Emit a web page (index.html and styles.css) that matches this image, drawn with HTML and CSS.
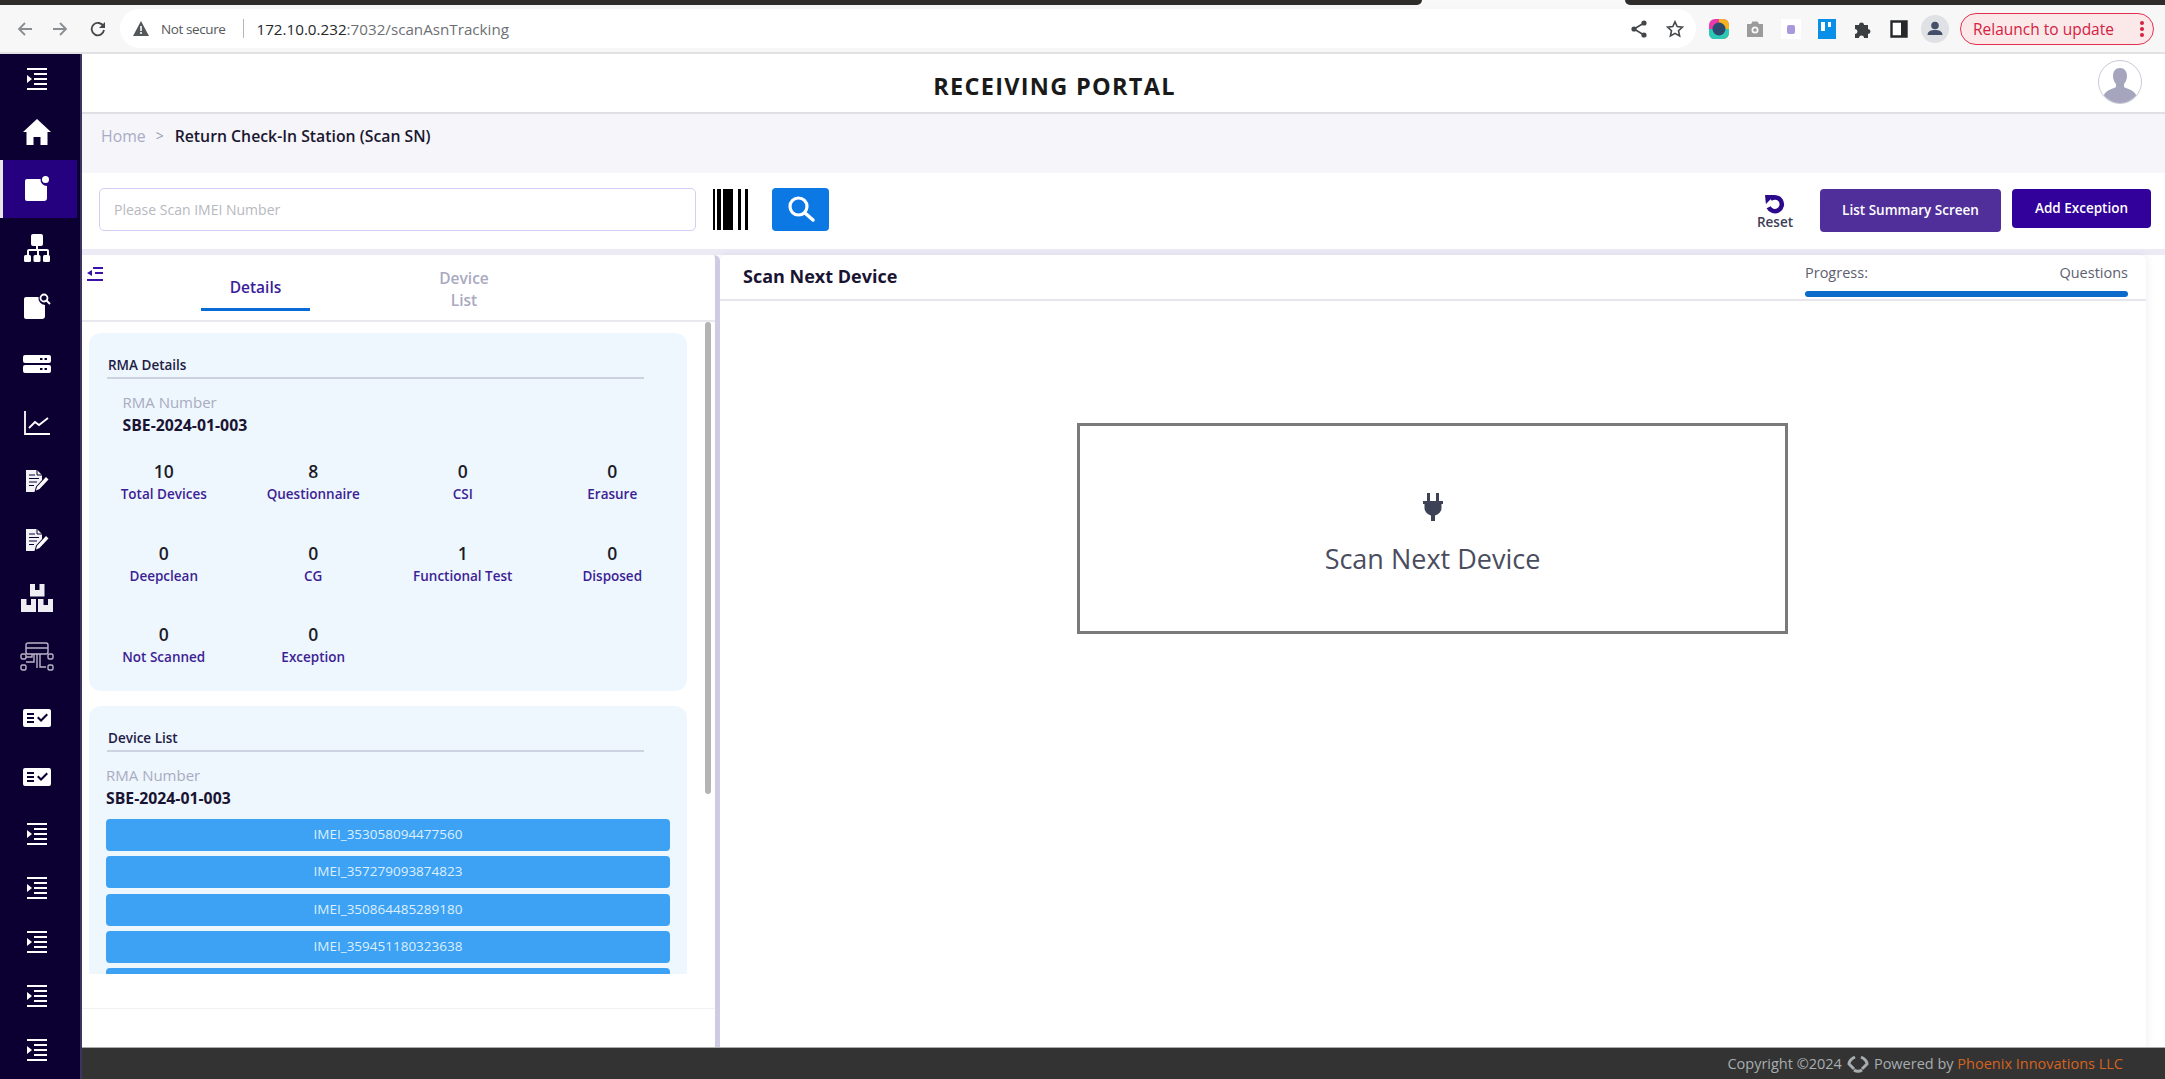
FILE: index.html
```html
<!DOCTYPE html>
<html lang="en">
<head>
<meta charset="utf-8">
<title>Receiving Portal</title>
<link rel="stylesheet" href="styles.css">
</head>
<body>
<svg class="defs" width="0" height="0" aria-hidden="true">
  <symbol id="i-indent" viewBox="0 0 20 22"><path fill="#fff" d="M0 0h20v2H0zM7 5h13v2H7zM7 10h13v2H7zM7 15h13v2H7zM0 20h20v2H0zM0 7l5 4-5 4z"/></symbol>
  <symbol id="i-check" viewBox="0 0 28 18"><path fill="#fff" fill-rule="evenodd" d="M2 0h24a2 2 0 0 1 2 2v14a2 2 0 0 1-2 2H2a2 2 0 0 1-2-2V2a2 2 0 0 1 2-2zM4 4v2h7V4zM4 8v2h7V8zM4 12v2h7v-2zM14 9l4 4 7-7-1.500-1.500L18 10l-2.500-2.500z"/></symbol>
  <symbol id="i-edit" viewBox="0 0 24 24"><path fill="#f2f1f6" d="M1 1h11l5 5v5l-6 6.500-1.500 5.500H1z"/><path fill="none" stroke="#0c0033" stroke-width="1" d="M12 1v5h5"/><path fill="none" stroke="#0c0033" stroke-width="1.200" d="M4 6h6M4 9.500h10M4 13h8M4 16.500h5"/><path fill="#fff" d="M21 8l2.500 2.500-9 9.500-3.500 1.500 1-3.800z"/></symbol>
</svg>

<div class="tabstrip"><span class="strip-dark strip-a"></span><span class="strip-gap"></span><span class="strip-dark strip-b"></span></div>
<header class="browser">
  <span class="nav"><svg width="16" height="16" viewBox="0 0 16 16"><path d="M15 8H2M8 2L2 8l6 6" fill="none" stroke="#8a8d91" stroke-width="1.800"/></svg></span>
  <span class="nav"><svg width="16" height="16" viewBox="0 0 16 16"><path d="M1 8h13M8 2l6 6-6 6" fill="none" stroke="#8a8d91" stroke-width="1.800"/></svg></span>
  <span class="nav nav-reload"><svg width="16" height="16" viewBox="0 0 16 16"><path d="M13.500 5.500A6.200 6.200 0 1 0 14 9" fill="none" stroke="#44474a" stroke-width="1.800"/><path d="M15 1v6H9z" fill="#44474a"/></svg></span>
  <div class="omnibox">
    <svg class="warn" width="16" height="15" viewBox="0 0 16 15"><path d="M8 0l8 15H0z" fill="#55585b"/><path d="M7.200 5h1.600v5H7.200zM7.200 11h1.600v2H7.200z" fill="#fff"/></svg>
    <span class="not-secure">Not secure</span>
    <span class="omni-sep"></span>
    <span class="url"><b>172.10.0.232</b>:7032/scanAsnTracking</span>
    <span class="omni-right">
      <svg width="16" height="18" viewBox="0 0 16 18"><path d="M13 3L3 9l10 6" fill="none" stroke="#44474a" stroke-width="1.600"/><circle cx="13" cy="3" r="2.600" fill="#44474a"/><circle cx="3" cy="9" r="2.600" fill="#44474a"/><circle cx="13" cy="15" r="2.600" fill="#44474a"/></svg>
      <svg width="18" height="18" viewBox="0 0 18 18"><path d="M9 1.800l2.200 4.800 5.200.6-3.900 3.500 1.100 5.200L9 13.300l-4.600 2.600 1.100-5.200L1.600 7.200l5.200-.6z" fill="none" stroke="#44474a" stroke-width="1.600"/></svg>
    </span>
  </div>
  <span class="ext ext-first"><svg width="20" height="20" viewBox="0 0 20 20"><rect width="20" height="20" rx="6" fill="#e63ba8"/><path d="M10 0h4a6 6 0 0 1 6 6v8a6 6 0 0 1-6 6h-4z" fill="#f4b31f"/><path d="M4 20a6 6 0 0 1-4-6v-4h20v4a6 6 0 0 1-6 6z" fill="#2cc8b5"/><circle cx="10" cy="10" r="6.500" fill="#2c4a6e"/></svg></span>
  <span class="ext"><svg width="18" height="18" viewBox="0 0 18 18"><path d="M1 4h4l1.500-2.500h5L13 4h4v13H1z" fill="#9b9b9b"/><circle cx="9" cy="10" r="3.500" fill="#f8f8f8"/><circle cx="9" cy="10" r="1.800" fill="#9b9b9b"/></svg></span>
  <span class="ext"><svg width="20" height="20" viewBox="0 0 20 20"><rect width="20" height="20" fill="#fff"/><rect x="6" y="6" width="8" height="9" rx="2" fill="#a999dc"/></svg></span>
  <span class="ext"><svg width="18" height="20" viewBox="0 0 18 20"><rect width="18" height="20" fill="#0a8fe8"/><rect x="3" y="3" width="4" height="9" fill="#fff"/><rect x="10" y="3" width="3" height="5" fill="#fff"/></svg></span>
  <span class="ext"><svg width="18" height="18" viewBox="0 0 18 18"><path d="M1 5h4a2.500 2.500 0 0 1 5 0h4v4a2.500 2.500 0 0 1 0 5v4h-4a2.500 2.500 0 0 0-5 0H1v-4a2.500 2.500 0 0 0 0-5z" fill="#3c3f42"/></svg></span>
  <span class="ext"><svg width="18" height="18" viewBox="0 0 18 18"><path d="M1.500 1.500h15v15h-15z" fill="#fff" stroke="#26282b" stroke-width="2.400"/><rect x="11" y="1.500" width="5.500" height="15" fill="#26282b"/></svg></span>
  <span class="ext"><svg width="28" height="28" viewBox="0 0 28 28"><circle cx="14" cy="14" r="14" fill="#dfe1e5"/><circle cx="14" cy="10.500" r="3.800" fill="#44506a"/><path d="M6.500 20c0-4 4-5 7.500-5s7.500 1 7.500 5z" fill="#44506a"/></svg></span>
  <div class="relaunch"><span>Relaunch to update</span><i class="dots"></i></div>
</header>

<div class="app">
  <nav class="sidebar">
    <a class="side-item"><svg width="20" height="22"><use href="#i-indent"/></svg></a>
    <a class="side-item"><svg width="28" height="26" viewBox="0 0 28 26"><path fill="#fff" d="M14 0l14 13h-3.500v13h-7v-8h-7v8h-7V13H0z"/></svg></a>
    <a class="side-item active"><svg width="26" height="26" viewBox="0 0 26 26"><path fill="#fff" d="M3 3h13.500a6.500 6.500 0 0 0 6.500 7v12a3 3 0 0 1-3 3H3a2 2 0 0 1-2-2V5a2 2 0 0 1 2-2z"/><circle cx="21.500" cy="3.500" r="3.500" fill="#fff"/></svg></a>
    <a class="side-item"><svg width="26" height="28" viewBox="0 0 26 28"><path fill="#fff" d="M9 0h8a2 2 0 0 1 2 2v8a2 2 0 0 1-2 2h-3v3h9a2 2 0 0 1 2 2v4h-2v-4h-8v4h-2v-4H5v4H3v-4a2 2 0 0 1 2-2h7v-3H9a2 2 0 0 1-2-2V2a2 2 0 0 1 2-2z"/><rect x="0" y="21" width="7" height="7" rx="1.500" fill="#fff"/><rect x="9.500" y="21" width="7" height="7" rx="1.500" fill="#fff"/><rect x="19" y="21" width="7" height="7" rx="1.500" fill="#fff"/></svg></a>
    <a class="side-item"><svg width="28" height="26" viewBox="0 0 28 26"><path fill="#fff" d="M3 4h12.500a7 7 0 0 0 6.500 8v11a3 3 0 0 1-3 3H3a2 2 0 0 1-2-2V6a2 2 0 0 1 2-2z"/><circle cx="21" cy="5" r="3.500" fill="none" stroke="#fff" stroke-width="1.800"/><path d="M23.500 7.500L27 11" stroke="#fff" stroke-width="2"/></svg></a>
    <a class="side-item"><svg width="28" height="18" viewBox="0 0 28 18"><path fill="#fff" fill-rule="evenodd" d="M2 0h24a2 2 0 0 1 2 2v4a2 2 0 0 1-2 2H2a2 2 0 0 1-2-2V2a2 2 0 0 1 2-2zM17 3v2h2.500V3zM21.500 3v2H24V3zM2 10h24a2 2 0 0 1 2 2v4a2 2 0 0 1-2 2H2a2 2 0 0 1-2-2v-4a2 2 0 0 1 2-2zM17 13v2h2.500v-2zM21.500 13v2H24v-2z"/></svg></a>
    <a class="side-item"><svg width="26" height="24" viewBox="0 0 26 24"><path fill="none" stroke="#fff" stroke-width="1.800" d="M1 0v23h25"/><path fill="none" stroke="#fff" stroke-width="1.800" d="M5 17l6-6 4 3 9-7"/></svg></a>
    <a class="side-item"><svg width="24" height="24"><use href="#i-edit"/></svg></a>
    <a class="side-item"><svg width="24" height="24"><use href="#i-edit"/></svg></a>
    <a class="side-item"><svg width="32" height="28" viewBox="0 0 32 28"><path fill="#eeedf4" d="M9 0h14.500v12.500H9zM0 15h15v13H0zM17 15h15v13H17z"/><path fill="#0c0033" d="M14 0h4.500v6H14zM5.500 15H10v6H5.500zM22.500 15H27v6h-4.500z"/></svg></a>
    <a class="side-item"><svg width="34" height="30" viewBox="0 0 34 30"><g fill="none" stroke="#b9b7c8" stroke-width="1.400"><rect x="6" y="1" width="22" height="11" rx="2"/><path d="M6 6h22M14 12v8H6M20 12v13h6M17 12v14M12 12v3H6"/><rect x="1" y="12" width="5" height="5" rx="1.500"/><rect x="28" y="12" width="5" height="5" rx="1.500"/><rect x="1" y="23" width="5" height="5" rx="1.500"/><rect x="28" y="23" width="5" height="5" rx="1.500"/></g></svg></a>
    <a class="side-item"><svg width="28" height="18"><use href="#i-check"/></svg></a>
    <a class="side-item"><svg width="28" height="18"><use href="#i-check"/></svg></a>
    <a class="side-item short"><svg width="20" height="22"><use href="#i-indent"/></svg></a>
    <a class="side-item short"><svg width="20" height="22"><use href="#i-indent"/></svg></a>
    <a class="side-item short"><svg width="20" height="22"><use href="#i-indent"/></svg></a>
    <a class="side-item short"><svg width="20" height="22"><use href="#i-indent"/></svg></a>
    <a class="side-item short"><svg width="20" height="22"><use href="#i-indent"/></svg></a>
  </nav>

  <main class="main">
    <div class="topbar">
      <h1 class="portal-title">RECEIVING PORTAL</h1>
      <svg class="avatar" width="44" height="44" viewBox="0 0 44 44"><defs><clipPath id="avatar-clip"><circle cx="22" cy="22" r="21"/></clipPath></defs><circle cx="22" cy="22" r="21.500" fill="#fff" stroke="#c9c9d6"/><g clip-path="url(#avatar-clip)"><path fill="#a5a5bd" d="M22 8c4.500 0 7 3.500 7 8 0 3.500-1.500 6.500-3 8v3c3 2 12 3 13 11v6H5v-6c1-8 10-9 13-11v-3c-1.500-1.500-3-4.500-3-8 0-4.500 2.500-8 7-8z"/></g></svg>
    </div>
    <div class="crumbs"><span class="crumb-home">Home</span><span class="crumb-sep">&gt;</span><span class="crumb-here">Return Check-In Station (Scan SN)</span></div>
    <div class="actions">
      <input class="scan-input" type="text" placeholder="Please Scan IMEI Number">
      <svg class="barcode" width="36" height="41" viewBox="0 0 36 41"><path fill="#000" d="M0 0h2v41H0zM4 0h4v41H4zM10 0h10v41H10zM25 0h3v41h-3zM32 0h3v41h-3z"/></svg>
      <button class="search-btn" type="button" aria-label="Search"><svg width="30" height="30" viewBox="0 0 30 30"><circle cx="12.500" cy="12.500" r="8.500" fill="none" stroke="#fff" stroke-width="3.200"/><path d="M19 19l8 7" stroke="#fff" stroke-width="3.500" stroke-linecap="round"/></svg></button>
      <div class="reset">
        <svg width="20" height="20" viewBox="0 0 22 22"><path d="M6 5.500a7.600 7.600 0 1 1-2 9" fill="none" stroke="#2c0a8c" stroke-width="5"/><path d="M0 1l11 0L1 11z" fill="#2c0a8c"/></svg>
        <span>Reset</span>
      </div>
      <button class="btn btn-summary" type="button">List Summary Screen</button>
      <button class="btn btn-exception" type="button">Add Exception</button>
    </div>

    <div class="workspace">
      <section class="left-panel">
        <svg class="collapse" width="16" height="14" viewBox="0 0 16 14"><path fill="#3a12a8" d="M6 0h10v2H6zM8 5h8v2H8zM0 12h16v2H0zM5 3v6L0 6z"/></svg>
        <div class="tabs">
          <div class="tab tab-active">Details</div>
          <div class="tab tab-idle">Device<br>List</div>
        </div>
        <div class="scroller">
          <div class="card">
            <div class="card-title">RMA Details</div>
            <div class="rma rma-inset">
              <div class="rma-label">RMA Number</div>
              <div class="rma-value">SBE-2024-01-003</div>
            </div>
            <div class="stats">
              <div class="stat"><b>10</b><span>Total Devices</span></div>
              <div class="stat"><b>8</b><span>Questionnaire</span></div>
              <div class="stat"><b>0</b><span>CSI</span></div>
              <div class="stat"><b>0</b><span>Erasure</span></div>
              <div class="stat"><b>0</b><span>Deepclean</span></div>
              <div class="stat"><b>0</b><span>CG</span></div>
              <div class="stat"><b>1</b><span>Functional Test</span></div>
              <div class="stat"><b>0</b><span>Disposed</span></div>
              <div class="stat"><b>0</b><span>Not Scanned</span></div>
              <div class="stat"><b>0</b><span>Exception</span></div>
            </div>
          </div>
          <div class="card card-list">
            <div class="card-title">Device List</div>
            <div class="rma">
              <div class="rma-label">RMA Number</div>
              <div class="rma-value">SBE-2024-01-003</div>
            </div>
            <div class="imei-list">
              <div class="imei">IMEI_353058094477560</div>
              <div class="imei">IMEI_357279093874823</div>
              <div class="imei">IMEI_350864485289180</div>
              <div class="imei">IMEI_359451180323638</div>
              <div class="imei"></div>
            </div>
          </div>
        </div>
        <div class="panel-foot"></div>
        <div class="scrollbar"></div>
      </section>

      <section class="right-panel">
        <div class="right-head">
          <h2 class="right-title">Scan Next Device</h2>
          <div class="progress">
            <div class="progress-labels"><span>Progress:</span><span>Questions</span></div>
            <div class="progress-bar"></div>
          </div>
        </div>
        <div class="right-body">
          <div class="scan-box">
            <svg width="22" height="28" viewBox="0 0 22 28"><path fill="#3d4256" d="M5 0h3v8H5zM14 0h3v8h-3zM1 8h20v3h-1.500v4c0 4-3.500 6.500-6.500 7.500V28H9v-5.500C6 21.500 2.500 19 2.500 15v-4H1z"/></svg>
            <div class="scan-text">Scan Next Device</div>
          </div>
        </div>
      </section>
    </div>

    <footer class="footer">
      <span>Copyright ©2024</span>
      <svg width="22" height="20" viewBox="0 0 22 20"><path fill="none" stroke="#a8adb0" stroke-width="3" d="M8 3C4 5 2 8 2 10l5 5M14 3c4 2 6 5 6 7l-5 5M7 16c3 2 5 2 8 0"/></svg>
      <span>Powered by <em class="brand">Phoenix Innovations LLC</em></span>
    </footer>
  </main>
</div>
</body>
</html>
```

FILE: styles.css
```css
* { box-sizing: border-box; }
html, body { margin: 0; height: 100%; overflow: hidden; }
body { display: flex; flex-direction: column; background: #fff; font-family: "Open Sans", "Noto Sans", sans-serif; color: #1a1433; }
.defs { position: absolute; }

.tabstrip { display: flex; height: 5px; flex: none; }
.strip-dark { background: #2f2d2b; }
.strip-a { width: 1422px; border-bottom-right-radius: 5px; }
.strip-gap { width: 203px; background: #f8f8f8; }
.strip-b { flex: 1; border-bottom-left-radius: 5px; }

.browser { display: flex; align-items: center; flex: none; height: 49px; padding-left: 7px; background: #f7f7f8; border-bottom: 2px solid #e2e2e4; }
.nav { width: 35px; display: flex; justify-content: center; }
.nav-reload { margin-left: 3px; }
.omnibox { display: flex; align-items: center; width: 1576px; height: 39px; margin-left: 5px; padding-left: 13px; border-radius: 20px; background: #fff; font-size: 15.200px; }
.warn { margin-right: 12px; }
.not-secure { color: #55585b; font-size: 13.500px; letter-spacing: -.4px; }
.omni-sep { width: 1px; height: 19px; margin: 0 12px 0 18px; background: #b5b7ba; }
.url { color: #6d7074; }
.url b { font-weight: 400; color: #26282b; }
.omni-right { display: flex; align-items: center; gap: 19px; margin-left: auto; padding-right: 12px; }
.ext { width: 36px; display: flex; justify-content: center; flex: none; }
.ext-first { margin-left: 5px; }
.relaunch { display: flex; align-items: center; justify-content: space-between; width: 194px; height: 32px; margin-left: 7px; padding: 0 9px 0 12px; border: 1.500px solid #e3304f; border-radius: 16px; background: #fbe9ea; color: #d5203f; font-size: 15.500px; white-space: nowrap; }
.dots { width: 4px; height: 4px; border-radius: 50%; background: #d5203f; box-shadow: 0 -6px 0 #d5203f, 0 6px 0 #d5203f; }

.app { flex: 1; display: flex; min-height: 0; }
.sidebar { width: 82px; flex: none; display: flex; flex-direction: column; background: #0c0033; overflow: hidden; border-right: 2px solid #3d3560; }
.side-item { display: flex; align-items: center; justify-content: center; flex: none; width: 77px; height: 58.400px; padding-right: 3px; }
.side-item.short { height: 54px; }
.side-item:nth-child(1) { height: 50px; }
.side-item:nth-child(2) { height: 56px; }
.side-item:nth-child(11), .side-item:nth-child(12) { height: 60.500px; }
.side-item.active { background: #25007f; border-left: 3px solid #e6e6e6; padding-right: 6px; }
.main { flex: 1; min-width: 0; display: flex; flex-direction: column; }

.topbar { position: relative; flex: none; display: flex; align-items: center; justify-content: center; height: 60px; padding-top: 6px; background: #fff; border-bottom: 2px solid #dfdfe5; }
.portal-title { margin: 0 0 0 -138px; font-size: 23.500px; font-weight: 700; letter-spacing: 1.300px; color: #1a1a1a; }
.avatar { position: absolute; right: 23px; top: 6px; }

.crumbs { flex: none; display: flex; align-items: center; height: 59px; padding: 0 0 16px 19px; background: #f5f5fa; font-size: 15.800px; }
.crumb-home { color: #a9acc4; }
.crumb-sep { margin: 0 11px 0 10px; color: #9a9db0; font-size: 14px; }
.crumb-here { color: #1b1730; font-weight: 600; }

.actions { flex: none; display: flex; align-items: center; height: 76px; padding: 0 14px 4px 17px; background: #fff; }
.scan-input { width: 597px; height: 43px; padding: 0 14px; margin-top: 1px; border: 1.500px solid #d6ccf5; border-radius: 5px; background: #fff; font-family: inherit; font-size: 14px; outline: none; }
.scan-input::placeholder { color: #b8b8c0; }
.barcode { margin-left: 17px; }
.search-btn { display: flex; align-items: center; justify-content: center; width: 57px; height: 43px; margin-left: 23px; border: 0; border-radius: 4px; background: #0b78e3; padding: 0; }
.reset { display: flex; flex-direction: column; align-items: center; margin-left: auto; margin-right: 27px; padding-top: 6px; color: #3d3d55; font-size: 13.500px; line-height: 17px; font-weight: 600; }
.btn { border: 0; border-radius: 4px; color: #fff; font-family: inherit; font-size: 13.500px; font-weight: 600; padding: 0; }
.btn-summary { width: 181px; height: 43px; margin-top: 2px; background: #512f9a; }
.btn-exception { width: 139px; height: 39px; margin-left: 11px; margin-bottom: 2px; background: #32009a; }

.workspace { flex: 1; min-height: 0; display: flex; padding: 6px 19px 0 0; background: linear-gradient(#ecebf5 0, #ecebf5 6px, #fff 6px); }
.left-panel { position: relative; width: 638px; flex: none; display: flex; flex-direction: column; background: #fff; border-radius: 0 6px 0 0; border-right: 5px solid #cfcbe2; }
.collapse { position: absolute; left: 5px; top: 12px; }
.tabs { flex: none; display: flex; height: 67px; padding-left: 119px; border-bottom: 2px solid #e8e8ee; }
.tab { text-align: center; font-size: 15.500px; line-height: 22px; font-weight: 600; }
.tab-active { width: 109px; height: 56px; padding-top: 21px; color: #3a1d9a; border-bottom: 3px solid #0b6bd6; }
.tab-idle { width: 108px; margin-left: 100px; padding-top: 12px; color: #a9a9c0; }
.scroller { height: 652px; flex: none; padding: 11px 0 0 7px; overflow: hidden; }
.panel-foot { flex: none; height: 35px; border-bottom: 1px solid #f1f1f4; }
.scrollbar { position: absolute; left: 623px; top: 67px; width: 6px; height: 472px; border-radius: 3px; background: #b4b4b4; }
.card { width: 598px; padding: 21px 0 25px; background: #eef6fe; border-radius: 12px; }
.card-list { margin-top: 15px; padding-bottom: 20px; }
.card-title { width: 537px; margin-left: 18px; padding: 1px 0 2px 1px; border-bottom: 2px solid #cdd2e0; font-size: 13.500px; line-height: 20px; font-weight: 600; color: #221b44; }
.rma { margin: 13px 0 0 17px; }
.rma-inset { margin-left: 33.500px; }
.rma-label { font-size: 15px; line-height: 20px; color: #a9acc0; }
.rma-value { margin-top: 3px; font-size: 15.800px; line-height: 20px; font-weight: 700; color: #1a1433; }
.stats { display: grid; grid-template-columns: repeat(4, 1fr); row-gap: 38.500px; margin-top: 25px; text-align: center; }
.stat b { display: block; font-size: 17.500px; line-height: 22px; font-weight: 600; color: #1c1c28; }
.stat span { display: block; margin-top: 3px; font-size: 13.500px; line-height: 18px; font-weight: 600; color: #3d1f94; white-space: nowrap; }
.imei-list { display: flex; flex-direction: column; gap: 5.300px; margin: 11px 0 0 17px; width: 564px; }
.imei { height: 32px; border-radius: 4px; background: #3da2f4; color: #dcefff; font-size: 13.500px; line-height: 31px; text-align: center; }

.right-panel { flex: 1; min-width: 0; display: flex; flex-direction: column; background: #fff; border-radius: 6px 6px 0 0; box-shadow: 0 0 8px rgba(80, 70, 140, .12); }
.right-head { flex: none; display: flex; align-items: flex-start; justify-content: space-between; height: 46px; padding: 0 18px 0 23px; border-bottom: 2px solid #e6e6ec; }
.right-title { margin: 9px 0 0; font-size: 18px; line-height: 24px; font-weight: 700; color: #1a1433; }
.progress { width: 323px; padding-top: 8px; }
.progress-labels { display: flex; justify-content: space-between; font-size: 14.500px; line-height: 20px; color: #5d6070; }
.progress-bar { height: 6px; margin-top: 8px; border-radius: 3px; background: #0b6bcb; }
.right-body { flex: 1; display: flex; justify-content: center; align-items: flex-start; padding: 122px 1px 0 0; }
.scan-box { display: flex; flex-direction: column; align-items: center; width: 711px; height: 211px; padding-top: 67px; border: 3px solid #7a7a7a; }
.scan-text { margin-top: 20px; font-size: 27px; line-height: 36px; color: #4a4d5e; }

.footer { flex: none; display: flex; align-items: center; justify-content: flex-end; gap: 5px; height: 32px; padding: 0 42px 0 0; background: #333; border-top: 1px solid #aaa; color: #a8adb0; font-size: 14.500px; }
.brand { font-style: normal; color: #d4631f; }
```
